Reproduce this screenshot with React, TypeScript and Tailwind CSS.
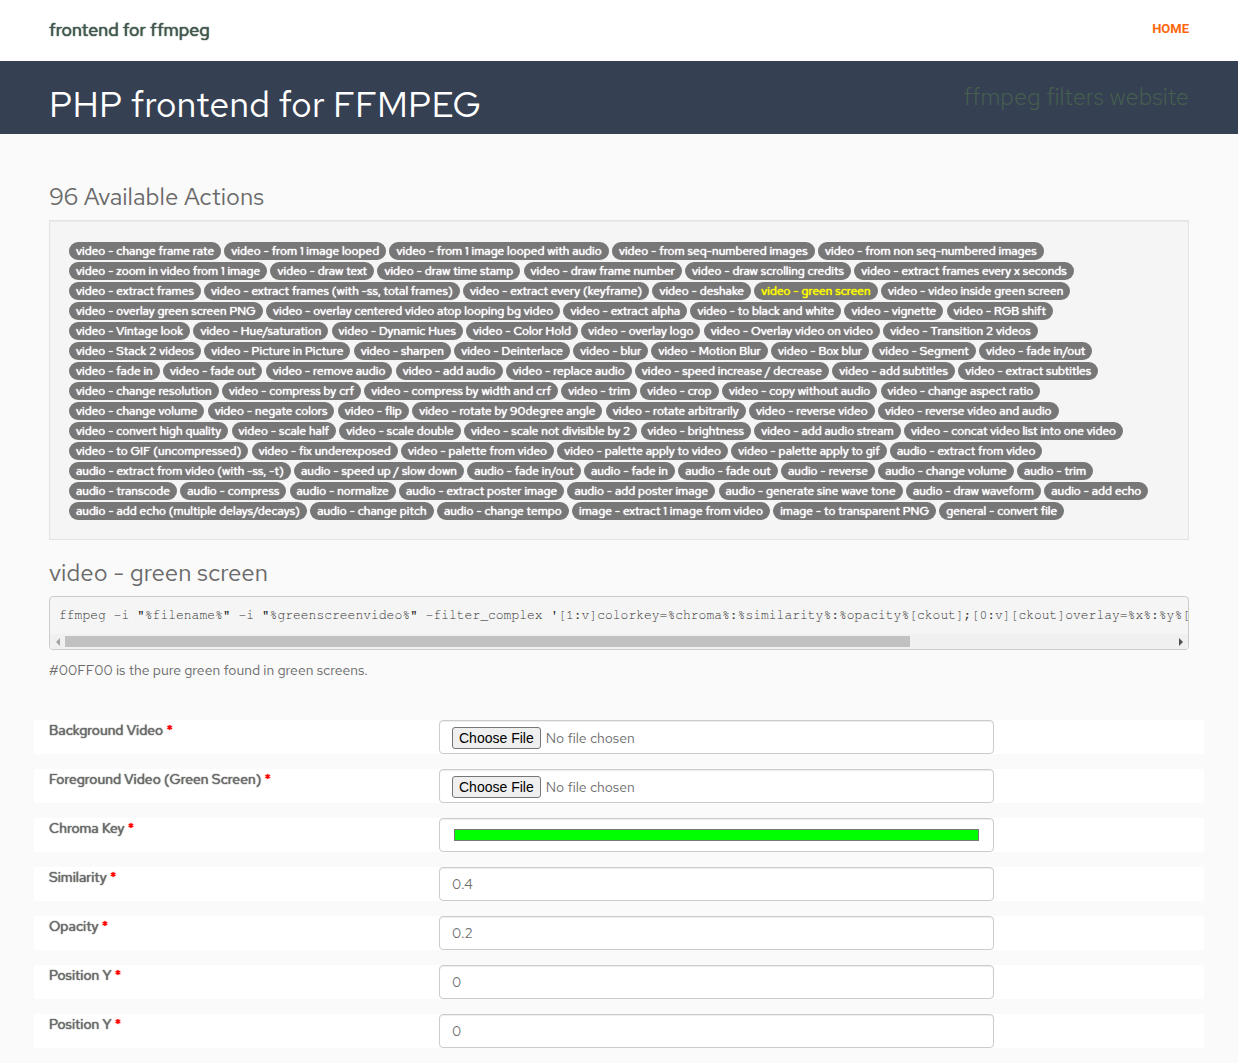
import React from "react";

const ACTIONS: [string, string[]][] = [
  [
    "video",
    [
      "change frame rate", "from 1 image looped", "from 1 image looped with audio", "from seq-numbered images",
      "from non seq-numbered images", "zoom in video from 1 image", "draw text", "draw time stamp", "draw frame number",
      "draw scrolling credits", "extract frames every x seconds", "extract frames",
      "extract frames (with -ss, total frames)", "extract every (keyframe)", "deshake", "green screen",
      "video inside green screen", "overlay green screen PNG", "overlay centered video atop looping bg video",
      "extract alpha", "to black and white", "vignette", "RGB shift", "Vintage look", "Hue/saturation",
      "Dynamic Hues", "Color Hold", "overlay logo", "Overlay video on video", "Transition 2 videos",
      "Stack 2 videos", "Picture in Picture", "sharpen", "Deinterlace", "blur", "Motion Blur", "Box blur", "Segment",
      "fade in/out", "fade in", "fade out", "remove audio", "add audio", "replace audio",
      "speed increase / decrease", "add subtitles", "extract subtitles", "change resolution", "compress by crf",
      "compress by width and crf", "trim", "crop", "copy without audio", "change aspect ratio", "change volume",
      "negate colors", "flip", "rotate by 90degree angle", "rotate arbitrarily", "reverse video",
      "reverse video and audio", "convert high quality", "scale half", "scale double", "scale not divisible by 2",
      "brightness", "add audio stream", "concat video list into one video", "to GIF (uncompressed)",
      "fix underexposed", "palette from video", "palette apply to video", "palette apply to gif",
    ],
  ],
  [
    "audio",
    [
      "extract from video", "extract from video (with -ss, -t)", "speed up / slow down", "fade in/out", "fade in",
      "fade out", "reverse", "change volume", "trim", "transcode", "compress", "normalize", "extract poster image",
      "add poster image", "generate sine wave tone", "draw waveform", "add echo",
      "add echo (multiple delays/decays)", "change pitch", "change tempo",
    ],
  ],
  ["image", ["extract 1 image from video", "to transparent PNG"]],
  ["general", ["convert file"]],
];

const BADGES = ACTIONS.flatMap(([kind, names]) => names.map((name) => `${kind} - ${name}`));
const CURRENT = "video - green screen";

const COMMAND =
  "ffmpeg -i \"%filename%\" -i \"%greenscreenvideo%\" -filter_complex '[1:v]colorkey=%chroma%:%similarity%:%opacity%[ckout];[0:v][ckout]overlay=%x%:%y%[out]' -map \"[out]\" -map 0:a? \"%output%\"";

const FIELDS = [
  { id: "background", label: "Background Video", type: "file", value: undefined },
  { id: "foreground", label: "Foreground Video (Green Screen)", type: "file", value: undefined },
  { id: "chroma", label: "Chroma Key", type: "color", value: "#00ff00" },
  { id: "similarity", label: "Similarity", type: "text", value: "0.4" },
  { id: "opacity", label: "Opacity", type: "text", value: "0.2" },
  { id: "position-x", label: "Position Y", type: "text", value: "0" },
  { id: "position-y", label: "Position Y", type: "text", value: "0" },
];

// A heavier stroke that keeps the regular weight's letter widths.
const STRONG = "[text-shadow:0_0_1px_currentColor,0_0_1px_currentColor]";

const CONTROL =
  "block h-[34px] w-full rounded border border-[#cccccc] bg-white px-3 py-[6px] text-sm leading-5 text-[#6f6f6f] shadow-[inset_0_1px_1px_rgba(0,0,0,0.075)] file:mr-[5px] file:rounded-[3px] file:border file:border-solid file:border-[#767676] file:bg-[#efefef] file:px-[6px] file:font-['Liberation_Sans'] file:leading-5 file:text-black";

function Badge({ text }: { text: string }) {
  return (
    <>
      <a
        href="#"
        className={`mb-[2px] inline-block rounded-[10px] bg-[#777777] px-[7px] py-[3px] text-center align-top text-xs leading-3 whitespace-nowrap ${STRONG} ${
          text === CURRENT ? "text-[#ffff00]" : "text-white"
        }`}
      >
        {text}
      </a>{" "}
    </>
  );
}

function ScrollTrack() {
  return (
    <div aria-hidden="true" className="flex h-[15px] items-center bg-[#f0f0f0]">
      <span className="flex w-[15px] shrink-0 justify-center">
        <svg width="4" height="8" viewBox="0 0 4 8"><path d="M4 0v8L0 4z" fill="#a3a3a3" /></svg>
      </span>
      <div className="min-w-0 flex-1">
        <div className="h-[11px] w-[76.3%] bg-[#c1c1c1]" />
      </div>
      <span className="flex w-[15px] shrink-0 justify-center">
        <svg width="4" height="8" viewBox="0 0 4 8"><path d="M0 0v8l4-4z" fill="#505050" /></svg>
      </span>
    </div>
  );
}

export default function App() {
  return (
    <div className="min-h-screen bg-[#fafafa] pb-4 font-['Red_Hat_Text','Red_Hat_Display',Roboto,sans-serif] text-sm leading-5 text-[#6a6a6a]">
      <header className="bg-white">
        <div className="mx-auto flex h-[61px] max-w-[1170px] items-center justify-between px-[15px] pb-[2px]">
          <a href="#" className={`text-lg text-[#43574f] ${STRONG}`}>frontend for ffmpeg</a>
          <nav className="pb-[2px]">
            <a href="#" className="font-[Roboto] text-[13px] font-bold text-[#fd680e]">HOME</a>
          </nav>
        </div>
      </header>

      <div className="bg-[#354052]">
        <div className="mx-auto flex h-[73px] max-w-[1170px] items-start justify-between px-[15px]">
          <h1 className="mt-[23px] text-4xl leading-10 text-white">PHP frontend for FFMPEG</h1>
          <a href="#" className="mt-6 text-2xl leading-6 font-light text-[#46604f]">ffmpeg filters website</a>
        </div>
      </div>

      <main className="mx-auto max-w-[1170px] px-[15px] pt-[50px]">
        <h3 className="text-2xl leading-[26px]">96 Available Actions</h3>
        <div className="mt-[10px] border border-[#e3e3e3] bg-[#f5f5f5] px-[19px] pt-[21px] pb-[17px] shadow-[inset_0_1px_1px_rgba(0,0,0,0.05)]">
          {BADGES.map((text) => (
            <Badge key={text} text={text} />
          ))}
        </div>

        <h3 className="mt-5 text-2xl leading-[26px]">video - green screen</h3>
        <div className="mt-[10px] overflow-hidden rounded border border-[#cccccc] bg-[#f5f5f5]">
          <pre className="overflow-x-auto px-[9px] py-[9px] font-[FreeMono,'Liberation_Mono',monospace] text-[13px] leading-[19px] text-[#333333]">{COMMAND}</pre>
          <ScrollTrack />
        </div>
        <p className="mt-[10px]">#00FF00 is the pure green found in green screens.</p>

        <form className="-mx-[15px] mt-10 grid gap-[15px]">
          {FIELDS.map((f) => (
            <div key={f.id} className="grid grid-cols-12 bg-white">
              <label htmlFor={f.id} className={`col-span-4 px-[15px] ${STRONG}`}>
                {f.label} <span className="text-[#ff0000]">*</span>
              </label>
              <div className="col-span-6 px-[15px]">
                <input id={f.id} type={f.type} defaultValue={f.value} className={CONTROL} />
              </div>
            </div>
          ))}
        </form>
      </main>
    </div>
  );
}
